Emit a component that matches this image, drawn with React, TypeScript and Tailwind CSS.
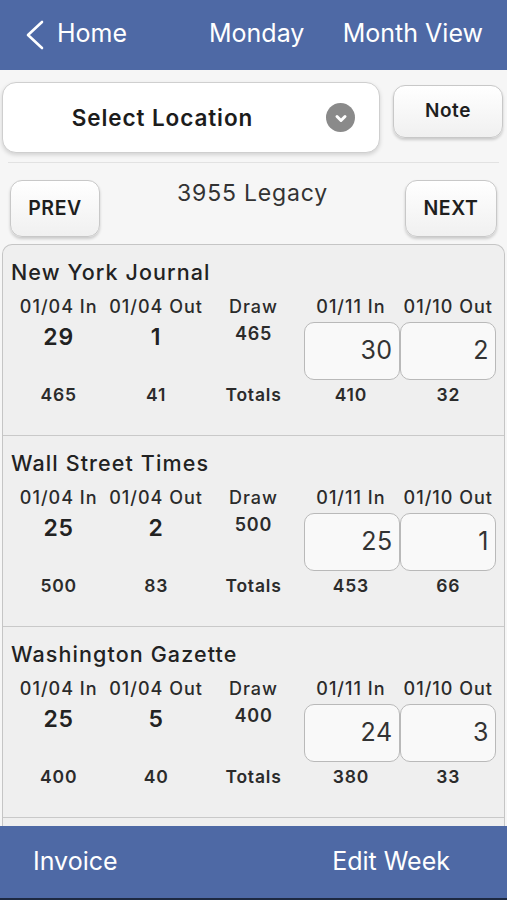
type Paper = {
  name: string;
  prevIn: string;
  prevOut: string;
  draw: string;
  nextIn: string;
  nextOut: string;
  totals: [string, string, string, string];
};

const papers: Paper[] = [
  { name: 'New York Journal', prevIn: '29', prevOut: '1', draw: '465', nextIn: '30', nextOut: '2', totals: ['465', '41', '410', '32'] },
  { name: 'Wall Street Times', prevIn: '25', prevOut: '2', draw: '500', nextIn: '25', nextOut: '1', totals: ['500', '83', '453', '66'] },
  { name: 'Washington Gazette', prevIn: '25', prevOut: '5', draw: '400', nextIn: '24', nextOut: '3', totals: ['400', '40', '380', '33'] },
];

const font = { fontFamily: 'Inter, "Liberation Sans", sans-serif' };

function PaperRow({ p }: { p: Paper }) {
  const head = 'flex h-[28px] items-center justify-center text-[18px] font-medium text-[#2b2b2b] tracking-[1px]';
  const total = 'flex h-[26px] items-center justify-center text-[17.5px] font-semibold text-[#2b2b2b] tracking-[0.8px]';
  const box =
    'flex h-[58px] items-center justify-end rounded-[10px] border border-[#b9b9b9] bg-[#f9f9f9] pr-[6px] text-[25px] text-[#333] tracking-[0.5px]';
  return (
    <div className="h-[191px] border-b border-[#c9c9c9] px-[7px]">
      <div className="h-[41px] pl-[1px] pt-[14px] text-[21.5px] font-medium leading-[26px] tracking-[1.1px] text-[#222]">{p.name}</div>
      <div className="mt-[6px] grid grid-cols-5">
        <div className={head}>01/04 In</div>
        <div className={head}>01/04 Out</div>
        <div className={head}>Draw</div>
        <div className={head}>01/11 In</div>
        <div className={head}>01/10 Out</div>

        <div className="h-[62px] pt-[3px] text-center text-[23px] font-semibold leading-[28px] tracking-[0.8px] text-[#222]">{p.prevIn}</div>
        <div className="h-[62px] pt-[3px] text-center text-[23px] font-semibold leading-[28px] tracking-[0.8px] text-[#222]">{p.prevOut}</div>
        <div className="h-[62px] pt-[2px] text-center text-[18px] font-semibold leading-[24px] tracking-[0.8px] text-[#2b2b2b]">{p.draw}</div>
        <div className="h-[62px] pl-[2px] pt-[2px]">
          <div className={box}>{p.nextIn}</div>
        </div>
        <div className="h-[62px] pr-[1px] pt-[2px]">
          <div className={box}>{p.nextOut}</div>
        </div>

        <div className={total}>{p.totals[0]}</div>
        <div className={total}>{p.totals[1]}</div>
        <div className={total}>Totals</div>
        <div className={total}>{p.totals[2]}</div>
        <div className={total}>{p.totals[3]}</div>
      </div>
    </div>
  );
}

const btn =
  'flex items-center justify-center rounded-[12px] border border-[#c8c8c8] bg-gradient-to-b from-white to-[#f0f0f0] shadow-[0_2px_3px_rgba(0,0,0,0.18)] text-[#1e1e1e] font-semibold';

export default function App() {
  return (
    <div className="flex h-[900px] w-[507px] flex-col overflow-hidden bg-[#f6f6f6]" style={font}>
      <header className="flex h-[70px] shrink-0 items-center bg-[#4e69a5] text-[25px] text-white">
        <div className="flex w-[190px] items-center pl-[24px]">
          <svg viewBox="0 0 20 30" className="h-[30px] w-[20px]" fill="none" stroke="white" strokeWidth={2.6} strokeLinecap="round" strokeLinejoin="round">
            <path d="M18 2L4 15l14 13" />
          </svg>
          <span className="ml-[13px] pb-[2px]">Home</span>
        </div>
        <span className="ml-[19px] pb-[2px]">Monday</span>
        <span className="ml-auto mr-[24px] pb-[2px]">Month View</span>
      </header>

      <div className="flex items-start px-[2px] pt-[12px]">
        <div className="flex h-[71px] w-[378px] items-center rounded-[14px] border border-[#cfcfcf] bg-white shadow-[0_2px_4px_rgba(0,0,0,0.15)]">
          <span className="flex-1 pl-[30px] text-center text-[22.5px] font-semibold tracking-[0.9px] text-[#1c1c1c]">Select Location</span>
          <span className="ml-[34px] mr-[24px] flex size-[29px] items-center justify-center rounded-full bg-[#8a8a8a]">
            <svg viewBox="0 0 16 16" className="size-[16px]" fill="none" stroke="white" strokeWidth={3} strokeLinecap="round" strokeLinejoin="round">
              <path d="M4 6.5l4 4 4-4" />
            </svg>
          </span>
        </div>
        <div className={`${btn} ml-[13px] mt-[3px] h-[53px] w-[110px] text-[19px] tracking-[0.6px]`}>Note</div>
      </div>

      <div className="mx-[8px] mt-[9px] h-px bg-[#e2e2e2]" />

      <div className="flex items-start px-[10px] pt-[17px]">
        <div className={`${btn} h-[57px] w-[90px] text-[19.5px] tracking-[0.6px]`}>PREV</div>
        <div className="flex-1 text-center text-[23px] leading-[26px] tracking-[0.8px] text-[#333]">3955 Legacy</div>
        <div className={`${btn} h-[57px] w-[92px] text-[19.5px] tracking-[0.6px]`}>NEXT</div>
      </div>

      <div className="mx-[2px] mt-[7px] flex-1 overflow-hidden rounded-t-[10px] border border-b-0 border-[#c5c5c5] bg-[#efefef]">
        {papers.map((p) => (
          <PaperRow key={p.name} p={p} />
        ))}
      </div>

      <footer className="flex h-[74px] shrink-0 items-center border-b-2 border-[#1d2941] bg-[#4e69a5] text-[25px] text-white">
        <span className="ml-[33px]">Invoice</span>
        <span className="ml-auto mr-[57px]">Edit Week</span>
      </footer>
    </div>
  );
}
